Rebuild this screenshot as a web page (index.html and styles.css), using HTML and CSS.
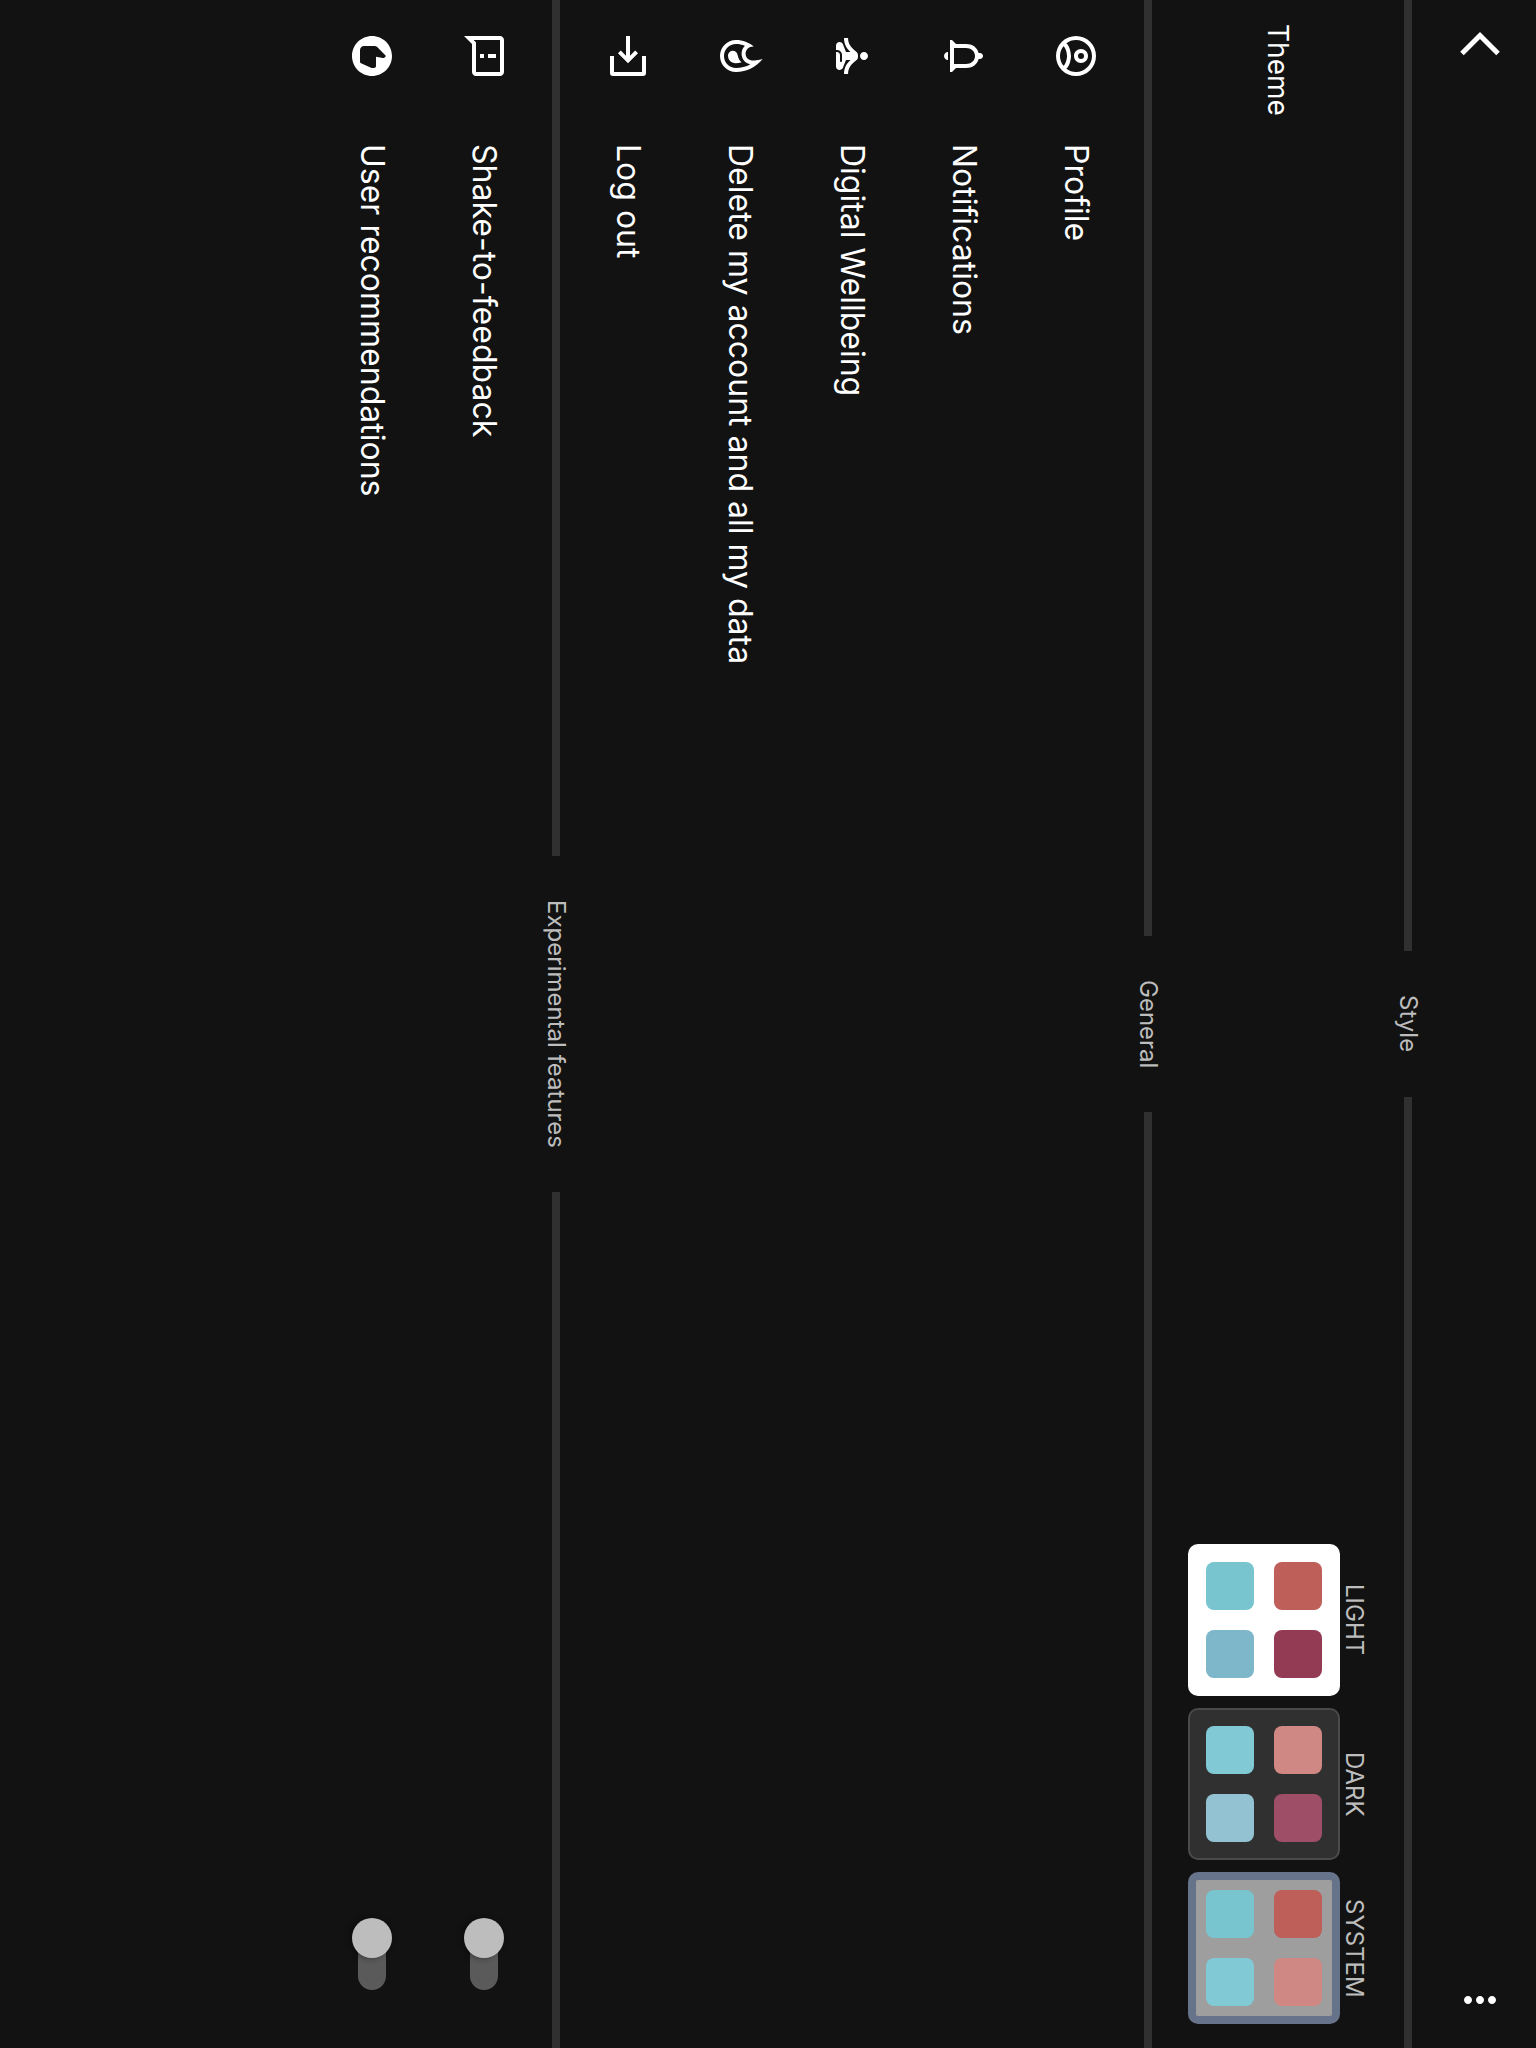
FILE: index.html
```html
<!DOCTYPE html>
<html lang="en">
<head>
<meta charset="utf-8">
<meta name="viewport" content="width=device-width, initial-scale=1">
<title>Settings</title>
<link rel="stylesheet" href="styles.css">
</head>
<body>
<header class="topbar">
  <button class="icon-button" type="button" aria-label="Back">
    <svg class="icon" viewBox="0 0 24 24"><path d="M11.67 3.87L9.9 2.1 0 12l9.9 9.9 1.77-1.77L3.54 12z"/></svg>
  </button>
  <button class="icon-button" type="button" aria-label="More options">
    <svg class="icon" viewBox="0 0 24 24"><path d="M12 8c1.1 0 2-.9 2-2s-.9-2-2-2-2 .9-2 2 .9 2 2 2zm0 2c-1.1 0-2 .9-2 2s.9 2 2 2 2-.9 2-2-.9-2-2-2zm0 6c-1.1 0-2 .9-2 2s.9 2 2 2 2-.9 2-2-.9-2-2-2z"/></svg>
  </button>
</header>
<main>
  <section>
    <h2 class="divider">Style</h2>
    <div class="theme" role="radiogroup" aria-labelledby="theme-title">
      <span class="theme-title" id="theme-title">Theme</span>
      <div class="theme-options">
        <label class="theme-option">
          <span class="theme-name">LIGHT</span>
          <input class="theme-radio" type="radio" name="theme" value="light">
          <span class="palette palette-light">
            <span class="swatch red"></span><span class="swatch wine"></span>
            <span class="swatch teal"></span><span class="swatch blue"></span>
          </span>
        </label>
        <label class="theme-option">
          <span class="theme-name">DARK</span>
          <input class="theme-radio" type="radio" name="theme" value="dark">
          <span class="palette palette-dark">
            <span class="swatch red-soft"></span><span class="swatch wine-soft"></span>
            <span class="swatch teal-soft"></span><span class="swatch blue-soft"></span>
          </span>
        </label>
        <label class="theme-option">
          <span class="theme-name">SYSTEM</span>
          <input class="theme-radio" type="radio" name="theme" value="system" checked>
          <span class="palette palette-system">
            <span class="swatch red"></span><span class="swatch red-soft"></span>
            <span class="swatch teal"></span><span class="swatch teal-soft"></span>
          </span>
        </label>
      </div>
    </div>
  </section>
  <section>
    <h2 class="divider">General</h2>
    <a class="row" href="#profile">
      <svg class="icon" viewBox="0 0 24 24"><path d="M12,2A10,10 0 0,0 2,12A10,10 0 0,0 12,22A10,10 0 0,0 22,12A10,10 0 0,0 12,2M7.07,18.28C7.5,17.38 10.12,16.5 12,16.5C13.88,16.5 16.5,17.38 16.93,18.28C15.57,19.36 13.86,20 12,20C10.14,20 8.43,19.36 7.07,18.28M18.36,16.83C16.93,15.09 13.46,14.5 12,14.5C10.54,14.5 7.07,15.09 5.64,16.83C4.62,15.5 4,13.82 4,12C4,7.59 7.59,4 12,4C16.41,4 20,7.59 20,12C20,13.82 19.38,15.5 18.36,16.83M12,6C10.06,6 8.5,7.56 8.5,9.5C8.5,11.44 10.06,13 12,13C13.94,13 15.5,11.44 15.5,9.5C15.5,7.56 13.94,6 12,6M12,11A1.5,1.5 0 0,1 10.5,9.5A1.5,1.5 0 0,1 12,8A1.5,1.5 0 0,1 13.5,9.5A1.5,1.5 0 0,1 12,11Z"/></svg>
      <span>Profile</span>
    </a>
    <a class="row" href="#notifications">
      <svg class="icon" viewBox="0 0 24 24"><path d="M12 22c1.1 0 2-.9 2-2h-4c0 1.1.9 2 2 2zm6-6v-5c0-3.07-1.63-5.64-4.5-6.32V4c0-.83-.67-1.5-1.5-1.5s-1.5.67-1.5 1.5v.68C7.64 5.36 6 7.92 6 11v5l-2 2v1h16v-1l-2-2zm-2 1H8v-6c0-2.48 1.51-4.5 4-4.5s4 2.02 4 4.5v6z"/></svg>
      <span>Notifications</span>
    </a>
    <a class="row" href="#wellbeing">
      <svg class="icon" viewBox="0 0 24 24"><path d="M12 4C13.11 4 14 4.89 14 6C14 7.11 13.11 8 12 8C10.9 8 10 7.11 10 6C10 4.89 10.9 4 12 4M21 16V14C18.76 14 16.84 13.04 15.4 11.32L14.06 9.72C13.68 9.26 13.12 9 12.53 9H11.5C10.89 9 10.33 9.26 9.95 9.72L8.61 11.32C7.16 13.04 5.24 14 3 14V16C5.77 16 8.19 14.83 10 12.75V15L6.12 16.55C5.45 16.82 5 17.5 5 18.21C5 19.2 5.8 20 6.79 20H9V19.5C9 18.12 10.12 17 11.5 17H14.5C14.78 17 15 17.22 15 17.5S14.78 18 14.5 18H11.5C10.67 18 10 18.67 10 19.5V20H17.21C18.2 20 19 19.2 19 18.21C19 17.5 18.55 16.82 17.88 16.55L14 15V12.75C15.81 14.83 18.23 16 21 16Z"/></svg>
      <span>Digital Wellbeing</span>
    </a>
    <button class="row" type="button">
      <svg class="icon" viewBox="0 0 24 24"><path d="M11.57 13.16c-1.36.28-2.17 1.16-2.17 2.41 0 1.34 1.11 2.42 2.49 2.42 2.05 0 3.71-1.66 3.71-3.71 0-1.07-.15-2.12-.46-3.12-.79 1.07-2.2 1.72-3.57 2zM13.5.67s.74 2.65.74 4.8c0 2.06-1.35 3.73-3.41 3.73-2.07 0-3.63-1.67-3.63-3.73l.03-.36C5.21 7.51 4 10.62 4 14c0 4.42 3.58 8 8 8s8-3.58 8-8C20 8.61 17.41 3.8 13.5.67zM12 20c-3.31 0-6-2.69-6-6 0-1.53.3-3.04.86-4.43 1.01 1.01 2.41 1.63 3.97 1.63 2.66 0 4.75-1.83 5.28-4.43C17.34 8.97 18 11.44 18 14c0 3.31-2.69 6-6 6z"/></svg>
      <span>Delete my account and all my data</span>
    </button>
    <button class="row" type="button">
      <svg class="icon" viewBox="0 0 24 24"><path d="M12 3h8.500A1.500 1.500 0 0 1 22 4.500v15A1.500 1.500 0 0 1 20.500 21H12v-2h8V5h-8zM9.250 8.410L10.660 7l5 5-5 5-1.410-1.410L11.840 13H2v-2h9.840z"/></svg>
      <span>Log out</span>
    </button>
  </section>
  <section>
    <h2 class="divider">Experimental features</h2>
    <label class="row">
      <svg class="icon" viewBox="0 0 24 24"><path d="M20 2H4c-1.100 0-1.990.9-1.990 2L2 22l4-4h14c1.100 0 2-.9 2-2V4c0-1.100-.9-2-2-2zm0 14H5.170l-.59.59-.58.58V4h16v12zM11 12h2v2h-2zm0-6h2v4h-2z"/></svg>
      <span>Shake-to-feedback</span>
      <input class="switch" type="checkbox" role="switch">
    </label>
    <label class="row">
      <svg class="icon" viewBox="0 0 24 24"><path d="M12 2C6.480 2 2 6.480 2 12s4.480 10 10 10 10-4.480 10-10S17.520 2 12 2zm6 9.800c0 .2 0 .5-.1.700l-2.300 5c-.2.400-.6.500-1 .5H9c-1.100 0-2-.9-2-2v-5.300c0-.5.200-.9.500-1.300L12 5l.7.700c.2.200.3.400.3.700v.2L12.400 10H17c.6 0 1 .4 1 1z"/></svg>
      <span>User recommendations</span>
      <input class="switch" type="checkbox" role="switch">
    </label>
  </section>
</main>
</body>
</html>
```
FILE: styles.css
```css
/* The screen reads top to bottom, with rows stacked from right to left. */
html {
  writing-mode: vertical-rl;
  text-orientation: sideways;
  height: 100%;
  background: #121212;
}

* {
  box-sizing: border-box;
}

body {
  height: 100%;
  margin: 0;
  color: #fff;
  background: #121212;
  font-family: Inter, "Liberation Sans", sans-serif;
  font-size: 32px;
  line-height: 40px;
}

button {
  writing-mode: inherit;
  margin: 0;
  border: 0;
  background: none;
  color: inherit;
  font: inherit;
  text-align: start;
}

.icon {
  display: block;
  flex: none;
  width: 48px;
  height: 48px;
  fill: currentColor;
  transform: rotate(90deg);
}

.topbar {
  display: flex;
  align-items: center;
  justify-content: space-between;
  block-size: 112px;
  padding-inline: 32px 24px;
}

.icon-button {
  padding: 0;
}

.divider {
  display: flex;
  align-items: center;
  gap: 44px;
  margin: 0;
  color: #bdbdbd;
  font-size: 24px;
  font-weight: 400;
  line-height: 32px;
}

.divider::before,
.divider::after {
  content: "";
  flex: 1;
  block-size: 8px;
  background: #303030;
}

.theme {
  display: flex;
  align-items: center;
  justify-content: space-between;
  padding: 24px;
}

.theme-title {
  font-size: 28px;
}

.theme-options {
  display: flex;
  gap: 12px;
}

.theme-option {
  display: flex;
  flex-direction: column;
  align-items: center;
}

.theme-name {
  color: #bdbdbd;
  font-size: 24px;
  line-height: 28px;
}

.theme-radio {
  position: absolute;
  opacity: 0;
}

.palette {
  display: grid;
  grid-template-columns: 48px 48px;
  grid-template-rows: 48px 48px;
  place-content: center;
  gap: 20px;
  inline-size: 152px;
  block-size: 152px;
  border: 2px solid;
  border-radius: 10px;
}

.palette-light {
  border-color: #fff;
  background: #fff;
}

.palette-dark {
  border-color: #4a4a4a;
  background: #303030;
}

.palette-system {
  background: #9e9e9e;
}

.theme-radio:checked + .palette {
  border: 8px solid #66738a;
}

.swatch {
  border-radius: 8px;
}

.red { background: #be5f59; }
.red-soft { background: #cf8884; }
.wine { background: #933b54; }
.wine-soft { background: #9f4e67; }
.teal { background: #78c5d0; }
.teal-soft { background: #80c9d5; }
.blue { background: #7eb6ca; }
.blue-soft { background: #93c3d3; }

.row {
  display: flex;
  align-items: center;
  gap: 64px;
  inline-size: 100%;
  block-size: 112px;
  padding-block: 0;
  padding-inline: 32px 58px;
  color: inherit;
  text-decoration: none;
}

.switch {
  appearance: none;
  position: relative;
  inline-size: 72px;
  block-size: 40px;
  margin: 0;
  margin-inline-start: auto;
}

.switch::before,
.switch::after {
  content: "";
  position: absolute;
}

.switch::before {
  inset-block: 6px;
  inset-inline: 4px 0;
  border-radius: 14px;
  background: #5a5a5a;
}

.switch::after {
  inset-block: 0;
  inset-inline-start: 0;
  inline-size: 40px;
  border-radius: 50%;
  background: #bdbdbd;
  box-shadow: -2px 0 6px rgba(0, 0, 0, 0.4);
}

.switch:checked::after {
  inset-inline-start: 32px;
}
```
